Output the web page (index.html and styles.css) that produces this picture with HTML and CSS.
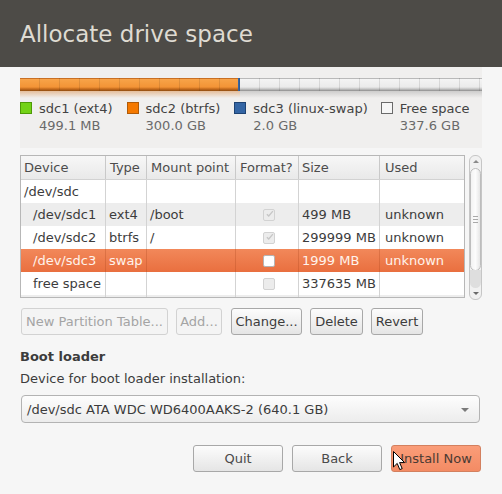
FILE: index.html
```html
<!DOCTYPE html>
<html lang="en">
<head>
<meta charset="utf-8">
<title>Allocate drive space</title>
<link rel="stylesheet" href="styles.css">
</head>
<body>
<header class="titlebar"><h1 class="title">Allocate drive space</h1></header>
<main class="content">
  <section class="usage">
    <div class="bar">
      <div class="seg seg-btrfs" style="width:218px"></div>
      <div class="seg seg-swap"></div>
      <div class="seg seg-free"></div>
    </div>
    <div class="reflect">
      <div class="rf rf-used" style="width:220px"></div>
      <div class="rf rf-free"></div>
    </div>
    <ul class="legend">
      <li class="lg-item"><span class="swatch sw-ext4"></span><div><div class="lg-name">sdc1 (ext4)</div><div class="lg-size">499.1 MB</div></div></li>
      <li class="lg-item"><span class="swatch sw-btrfs"></span><div><div class="lg-name">sdc2 (btrfs)</div><div class="lg-size">300.0 GB</div></div></li>
      <li class="lg-item"><span class="swatch sw-swap"></span><div><div class="lg-name">sdc3 (linux-swap)</div><div class="lg-size">2.0 GB</div></div></li>
      <li class="lg-item"><span class="swatch sw-free"></span><div><div class="lg-name">Free space</div><div class="lg-size">337.6 GB</div></div></li>
    </ul>
  </section>

  <div class="partitions">
    <div class="tree">
      <div class="row head">
        <div class="cell">Device</div><div class="cell">Type</div><div class="cell">Mount point</div><div class="cell">Format?</div><div class="cell">Size</div><div class="cell">Used</div>
      </div>
      <div class="row">
        <div class="cell">/dev/sdc</div><div class="cell"></div><div class="cell"></div><div class="cell"></div><div class="cell"></div><div class="cell"></div>
      </div>
      <div class="row alt">
        <div class="cell indent">/dev/sdc1</div><div class="cell">ext4</div><div class="cell">/boot</div><div class="cell center"><span class="check off checked"><svg viewBox="0 0 12 12" width="12" height="12"><path d="M2.5 6.2 L5 8.6 L10.5 2.2" fill="none" stroke="#c6c6c6" stroke-width="1.8"/></svg></span></div><div class="cell">499 MB</div><div class="cell">unknown</div>
      </div>
      <div class="row">
        <div class="cell indent">/dev/sdc2</div><div class="cell">btrfs</div><div class="cell">/</div><div class="cell center"><span class="check off checked"><svg viewBox="0 0 12 12" width="12" height="12"><path d="M2.5 6.2 L5 8.6 L10.5 2.2" fill="none" stroke="#c6c6c6" stroke-width="1.8"/></svg></span></div><div class="cell">299999 MB</div><div class="cell">unknown</div>
      </div>
      <div class="row selected">
        <div class="cell indent">/dev/sdc3</div><div class="cell">swap</div><div class="cell"></div><div class="cell center"><span class="check on"></span></div><div class="cell">1999 MB</div><div class="cell">unknown</div>
      </div>
      <div class="row">
        <div class="cell indent">free space</div><div class="cell"></div><div class="cell"></div><div class="cell center"><span class="check off"></span></div><div class="cell">337635 MB</div><div class="cell"></div>
      </div>
      <div class="row alt">
        <div class="cell"></div><div class="cell"></div><div class="cell"></div><div class="cell"></div><div class="cell"></div><div class="cell"></div>
      </div>
    </div>
    <div class="scrollbar">
      <span class="arrow up"></span>
      <div class="thumb"><span class="grip"></span></div>
      <div class="trough"></div>
      <span class="arrow down"></span>
    </div>
  </div>

  <div class="actions">
    <button class="btn w-new" disabled>New Partition Table...</button>
    <button class="btn w-add" disabled>Add...</button>
    <button class="btn w-change">Change...</button>
    <button class="btn w-delete">Delete</button>
    <button class="btn w-revert">Revert</button>
  </div>

  <h2 class="section-title">Boot loader</h2>
  <div class="field-label">Device for boot loader installation:</div>
  <div class="combo"><span>/dev/sdc ATA WDC WD6400AAKS-2 (640.1 GB)</span><span class="combo-arrow"></span></div>

  <div class="footer">
    <button class="btn wide">Quit</button>
    <button class="btn wide">Back</button>
    <button class="btn wide primary">Install Now</button>
    <svg class="cursor" width="13" height="20" viewBox="0 0 13 20"><path d="M0.5 0.5 L0.5 16 L4.2 12.4 L6.8 18.6 L9.2 17.6 L6.6 11.6 L11.6 11.6 Z" fill="#fff" stroke="#000" stroke-width="1"/></svg>
  </div>
</main>
</body>
</html>
```

FILE: styles.css
```css
* { box-sizing: border-box; }
html, body { margin: 0; padding: 0; }
body {
  width: 502px;
  height: 494px;
  overflow: hidden;
  background: #f6f6f6;
  font-family: "DejaVu Sans", "Liberation Sans", sans-serif;
  font-size: 13px;
  color: #3c3c3c;
}
.titlebar {
  height: 67px;
  background: #4d4b47;
  display: flex;
  align-items: center;
  padding-left: 20px;
}
.title {
  margin: 0;
  font-weight: normal;
  font-size: 23px;
  color: #dfdbd2;
  line-height: 1;
  padding-top: 1px;
}
.content { padding: 0 20px; position: relative; }

/* usage bar */
.usage {
  background: #f0efee;
  padding-top: 11px;
  height: 81px;
}
.bar {
  display: flex;
  height: 13px;
  position: relative;
}
.bar::after {
  content: "";
  position: absolute;
  inset: 0;
  background: repeating-linear-gradient(90deg, transparent 0 19px, rgba(0,0,0,0.1) 19px 20px);
  pointer-events: none;
}
.seg-btrfs {
  background: linear-gradient(#c96f22 0 1px, #f8a449 1px, #f39436 9px, #c46a1c 11px, #8f4d12 13px);
}
.seg-swap {
  width: 2px;
  background: #3465a4;
}
.seg-free {
  flex: 1;
  background: linear-gradient(#b9b9b9 0 1px, #f4f4f4 1px, #ebebeb 9px, #c4c4c4 11px, #8c8c8c 13px);
}
.reflect { display: flex; height: 7px; }
.rf-used { background: linear-gradient(rgba(214,130,55,0.45), rgba(240,239,238,0)); }
.rf-free { flex: 1; background: linear-gradient(rgba(140,140,140,0.35), rgba(240,239,238,0)); }

.legend {
  list-style: none;
  margin: 2px 0 0;
  padding: 0;
  display: flex;
  gap: 14px;
  line-height: 17px;
}
.lg-item { display: flex; gap: 7px; align-items: flex-start; }
.lg-item:nth-child(3) { margin-right: -1px; }
.swatch {
  width: 12px;
  height: 12px;
  margin-top: 2px;
  border: 1px solid #555;
  flex: none;
}
.sw-ext4 { background: #73d216; border-color: #4e9a06; }
.sw-btrfs { background: #f57900; border-color: #b15b08; }
.sw-swap { background: #3465a4; border-color: #1e4373; }
.sw-free { background: #f6f6f6; border-color: #6a6a6a; }
.lg-name { color: #434343; }
.lg-size { color: #6a6a6a; }

/* partitions tree */
.partitions {
  margin-top: 7px;
  display: flex;
  gap: 4px;
  height: 145px;
}
.tree {
  width: 445px;
  height: 143px;
  border: 1px solid #b7b7b7;
  background: #fff;
  overflow: hidden;
}
.row {
  display: grid;
  grid-template-columns: 84px 41px 89px 63px 81px 85px;
  height: 23px;
  align-items: stretch;
}
.row.head {
  height: 24px;
  background: linear-gradient(#f7f7f7, #e9e9e9);
  border-bottom: 1px solid #d2d2d2;
  color: #4c4c4c;
}
.row.alt { background: #ededed; }
.row.selected {
  background: linear-gradient(#f2885a, #e96f3f);
  color: #fff3ec;
}
.cell {
  border-left: 1px solid #d3d3d3;
  padding-left: 3px;
  display: flex;
  align-items: center;
  white-space: nowrap;
  overflow: hidden;
}
.cell:first-child { border-left: none; padding-left: 3px; }
.row.head .cell { border-left-color: #c9c9c9; padding-left: 4px; }
.row.head .cell:first-child { padding-left: 3px; }
.row.selected .cell { border-left-color: rgba(160,60,20,0.25); }
.cell.indent { padding-left: 12px; }
.cell.center { justify-content: center; }
.row .cell:nth-child(5) { padding-left: 3px; }
.row .cell:nth-child(6) { padding-left: 5px; }

.check {
  width: 12px;
  height: 12px;
  border-radius: 2px;
  display: inline-flex;
  align-items: center;
  justify-content: center;
}
.check.off { background: #ececec; border: 1px solid #d2d2d2; }
.check.on { background: #fff; border: 1px solid #b5b5b5; }
.check svg { margin-left: 1px; margin-top: -1px; }

/* scrollbar */
.scrollbar {
  width: 13px;
  height: 145px;
  border: 1px solid #c6c6c6;
  border-radius: 6px;
  background: #f1f1f1;
  display: flex;
  flex-direction: column;
  align-items: center;
  padding: 3px 0 3px;
}
.arrow {
  width: 0; height: 0;
  border-left: 3px solid transparent;
  border-right: 3px solid transparent;
  flex: none;
}
.arrow.up { border-bottom: 3px solid #8a8a8a; margin-top: 1px; }
.arrow.down { border-top: 3px solid #6a6a6a; margin-top: auto; margin-bottom: 1px; }
.thumb {
  margin-top: 5px;
  width: 11px;
  height: 103px;
  border: 1px solid #bdbdbd;
  border-radius: 6px;
  background: linear-gradient(90deg, #f3f3f3, #fcfcfc 50%, #e6e6e6);
  display: flex;
  align-items: center;
  justify-content: center;
}
.grip {
  width: 5px;
  height: 7px;
  background: repeating-linear-gradient(#a9a9a9 0 1px, transparent 1px 3px);
}
.trough {
  width: 11px;
  height: 18px;
  margin-top: -1px;
  background: #dedede;
  border-radius: 0 0 6px 6px;
}

/* buttons */
.actions {
  margin-top: 8px;
  margin-left: 1px;
  display: flex;
  gap: 8px;
}
.btn {
  font: inherit;
  color: #3c3c3c;
  height: 27px;
  padding: 0;
  border: 1px solid #a8a8a8;
  border-radius: 3px;
  background: linear-gradient(#fcfcfc, #e5e5e5);
  line-height: 1;
  white-space: nowrap;
}
.w-new { width: 147px; }
.w-add { width: 46px; }
.w-change { width: 71px; margin-left: 1px; }
.w-delete { width: 53px; }
.w-revert { width: 52px; }
.btn:disabled {
  color: #a4a4a4;
  border-color: #d2d2d2;
  background: #f4f4f4;
}
.section-title {
  margin: 13px 0 0;
  font-size: 13px;
  font-weight: bold;
  line-height: 17px;
  color: #3c3c3c;
}
.field-label { margin-top: 5px; line-height: 17px; }
.combo {
  margin: 8px 2px 0 1px;
  height: 28px;
  border: 1px solid #b3b3b3;
  border-radius: 4px;
  background: linear-gradient(#fdfdfd, #ececec);
  display: flex;
  align-items: center;
  justify-content: space-between;
  padding: 0 10px 0 5px;
}
.combo-arrow {
  width: 0; height: 0;
  border-left: 4px solid transparent;
  border-right: 4px solid transparent;
  border-top: 4px solid #7a7a7a;
  margin-top: 2px;
}
.footer {
  margin-top: 22px;
  margin-right: 1px;
  display: flex;
  justify-content: flex-end;
  gap: 9px;
  position: relative;
}
.btn.wide { width: 90px; height: 27px; color: #4a4a4a; }
.btn.primary {
  background: linear-gradient(#fa9d79, #f38b64);
  border-color: #d3805f;
  color: #4b3a33;
}
.cursor {
  position: absolute;
  left: 373px;
  top: 6px;
}
```
